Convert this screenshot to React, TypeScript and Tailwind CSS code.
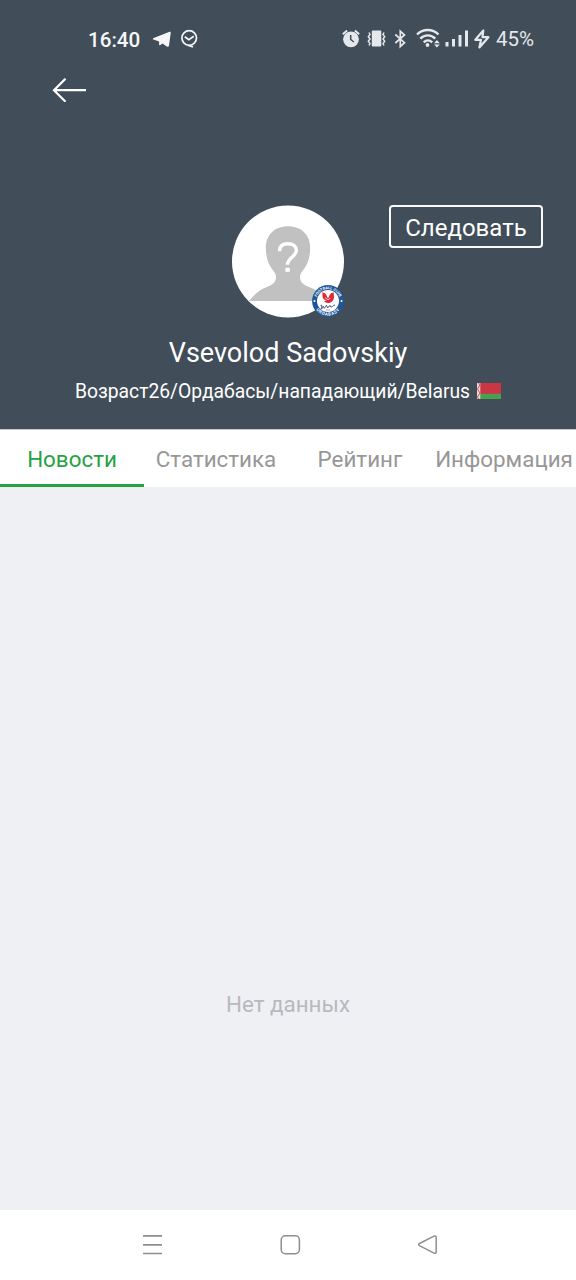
import React from "react";

function StatusBar() {
  return (
    <div className="flex h-[78px] items-center pl-[88px] text-[#f4f6f8]">
      <span className="w-[53px] whitespace-nowrap pt-[2px] text-[20.600px] font-medium leading-none">16:40</span>
      <svg className="ml-[10px]" width="52" height="30" viewBox="151 24 52 30" fill="none">
        <path d="M153.300 39.600c-.8-.4-.4-1.200.4-1.500L169 32c1.200-.5 1.900 0 1.700 1.200l-1.700 12.300c-.2 1.300-1.200 1.600-2.200 1l-4.300-3-2.200 1.500c-.6.400-1.200.300-1.200-.600v-3z" fill="currentColor" />
        <circle cx="189.200" cy="38" r="7.300" stroke="currentColor" strokeWidth="1.700" />
        <path d="M184.800 36.700l4 3 5-3.500" stroke="currentColor" strokeWidth="1.700" />
        <path d="M188.500 45.500l4.500 1.500" stroke="currentColor" strokeWidth="1.800" />
      </svg>
      <svg className="ml-[137px] text-[#e4e7eb]" width="154" height="30" viewBox="340 24 154 30" fill="none">
        <circle cx="351" cy="39.300" r="7.900" fill="currentColor" />
        <path d="M342.800 34.300l4.300-3.800M359.200 34.300l-4.300-3.800" stroke="currentColor" strokeWidth="2" />
        <path d="M350.700 35v4.500l3.200 2.500" stroke="#414d59" strokeWidth="1.500" />
        <rect x="371.800" y="30.500" width="9.500" height="16" rx="1" fill="currentColor" />
        <path d="M369 32.500l1 2-1.700 2.300 1.700 2.200-1.700 2.300 1.700 2.200-1 2M384 32.500l-1 2 1.700 2.300-1.700 2.200 1.700 2.300-1.700 2.200 1 2" stroke="currentColor" strokeWidth="1.500" />
        <path d="M395.300 34.500l9.200 8.200-4.200 3.800V31.200l4.200 3.800-9.200 8" stroke="currentColor" strokeWidth="1.700" />
        <path d="M417 34.500c6-6 15.500-6 21.500 0M420.300 38.600c4.300-4.300 10.700-4.300 15 0M423.700 42.300c2.500-2.500 6-2.500 8.500 0" stroke="currentColor" strokeWidth="2.400" />
        <circle cx="427.500" cy="45" r="1.900" fill="currentColor" />
        <path d="M434 43.200l2.900-3.200 2.900 3.200zM434 44.500h5.800l-2.900 3z" fill="currentColor" />
        <path d="M447 42v4.500M453.500 39v7.500M460 35v11.500M466.500 30.500v16" stroke="currentColor" strokeWidth="3" />
        <path d="M483.300 30.500l-8 9.300h5.700l-1.600 7.700 9-10.300h-5.900z" stroke="currentColor" strokeWidth="2.200" strokeLinejoin="round" />
      </svg>
      <span className="ml-[2px] whitespace-nowrap pt-[1px] text-[20.500px] leading-none text-[#e4e7eb]">45%</span>
    </div>
  );
}

function ClubBadge() {
  return (
    <svg className="absolute left-[79px] top-[79px]" width="33" height="33" viewBox="-17 -17 33 33">
      <defs>
        <path id="ring-top" d="M-11.900 0A11.900 11.900 0 0 1 11.900 0" />
        <path id="ring-bottom" d="M-14.700 0A14.700 14.700 0 0 0 14.700 0" />
      </defs>
      <circle r="15.900" fill="#1e5799" />
      <circle r="11" fill="#fff" />
      <text className="fill-white text-[3.800px] font-bold">
        <textPath href="#ring-top" startOffset="50%" textAnchor="middle">FOOTBALL CLUB</textPath>
      </text>
      <text className="fill-white text-[4.400px] font-bold tracking-[0.6px]">
        <textPath href="#ring-bottom" startOffset="50%" textAnchor="middle">ORDABASY</textPath>
      </text>
      <circle cx="-13.500" cy="0" r="1" fill="#fff" />
      <circle cx="13.500" cy="0" r="1" fill="#fff" />
      <path d="M-6-8.500c2.500 0 4 1 4.500 3L0-2.500l1.500-3c.5-2 2-3 4.500-3-.8 1.700.3 3 0 5C5.500-.3 3.200 2 .2 2-1.500 2-3.200 1-4 0c1 0 2-.2 2.500-.8C-4-1.200-5.500-2.500-5.500-4.500c0-1.500.3-2.700-.5-4z" fill="#df2837" />
      <path d="M-2.500-3.500C-1.500-1 1.500-.8 2-3" stroke="#fff" strokeWidth=".9" fill="none" />
      <path d="M-7.500 4.500c3-2 0 4 1 3.500s1-3 2-2.500-.5 2 1 1.500 1-3 2-2.500 0 2.500 1.500 2 1-2 2-2 0 2 1.500 1.500 1.500-2 3.500-2" stroke="#273e70" strokeWidth=".9" fill="none" />
      <path d="M-2 9h4" stroke="#df7780" strokeWidth=".8" />
    </svg>
  );
}

function Avatar() {
  return (
    <div className="relative mx-auto h-[112px] w-[112px] shrink-0">
      <svg width="112" height="113" viewBox="232 205 112 113" fill="none">
        <circle cx="288" cy="261.400" r="56" fill="#fff" />
        <path d="M288 226.300c-14 0-22.200 9.200-22.200 21.700 0 8.500 2.500 16.500 6.500 21.500 2.500 3 3.700 4.800 3.700 7.500 0 5-2.500 7.300-8 9.500-8.500 3-13 7.500-19 14.500h78c-6-7-10.500-11.500-19-14.500-5.500-2.200-8-4.500-8-9.500 0-2.700 1.200-4.500 3.700-7.500 4-5 6.500-13 6.500-21.500 0-12.500-8.200-21.700-22.200-21.700z" fill="#c1c1c1" />
        <path d="M279.500 251.300c0-5 3.300-7.500 8.500-7.500s8.300 2.600 8.300 6.800c0 6.200-8.800 6.700-8.800 14.200" stroke="#fff" strokeWidth="3.400" />
        <rect x="285.400" y="267.800" width="4.400" height="4" fill="#fff" />
      </svg>
      <ClubBadge />
    </div>
  );
}

function BelarusFlag() {
  return (
    <svg className="mb-[2px]" width="24" height="16" viewBox="0 0 24 16">
      <path d="M0 0h24v11H0z" fill="#cb3544" />
      <path d="M0 10.800h24V16H0z" fill="#4a9f50" />
      <path d="M0 0h3.300v16H0z" fill="#ead6d8" />
      <path d="M1.700 0l1.300 2-1.300 2L.4 6l1.300 2L3 10l-1.300 2-1.300 2 1.300 2" stroke="#bd4651" strokeWidth=".9" fill="none" />
    </svg>
  );
}

function ProfileHeader() {
  return (
    <header className="h-[429px] shrink-0 bg-[#414d59] text-white">
      <StatusBar />
      <button className="ml-[52px] block h-[24px]" aria-label="Назад">
        <svg width="36" height="24" viewBox="52 78 36 24" fill="none" stroke="#fff" strokeWidth="2.200">
          <path d="M54 90.200h32M65.500 78.700L54 90.200l11.500 11.500" />
        </svg>
      </button>
      <div className="mt-[103px] grid h-[113px] grid-cols-[1fr_112px_1fr] items-start">
        <span />
        <Avatar />
        <button className="ml-[45px] h-[43px] w-[154px] whitespace-nowrap rounded-[4px] border-2 border-[#f8fafb] pt-[2px] text-[24px] leading-none">
          Следовать
        </button>
      </div>
      <h1 className="mt-[17px] text-center text-[27px] leading-[36px]">Vsevolod Sadovskiy</h1>
      <div className="mt-[9px] flex items-center justify-center gap-[7px] text-[19.300px] leading-[24px]">
        <span className="whitespace-nowrap">Возраст26/Ордабасы/нападающий/Belarus</span>
        <BelarusFlag />
      </div>
    </header>
  );
}

function Tabs() {
  return (
    <nav className="grid h-[58px] shrink-0 grid-cols-4 border-t border-[#c5cace] bg-white text-center text-[22.400px] leading-[58px] text-[#979797]">
      <a className="h-[57px] whitespace-nowrap border-b-[3px] border-[#27a243] text-[#27a243]">Новости</a>
      <a className="whitespace-nowrap">Статистика</a>
      <a className="whitespace-nowrap">Рейтинг</a>
      <a className="whitespace-nowrap">Информация</a>
    </nav>
  );
}

function NavigationBar() {
  return (
    <footer className="flex h-[70px] shrink-0 items-center justify-between bg-white pl-[142px] pr-[137px]">
      <svg width="22" height="24" viewBox="142 1233 22 24" stroke="#8e8e8e" strokeWidth="1.700">
        <path d="M143 1235.800h19M143 1244.800h19M143 1253.500h19" />
      </svg>
      <svg width="22" height="22" viewBox="280 1234 22 22" fill="none" stroke="#8e8e8e" strokeWidth="1.500">
        <rect x="281.200" y="1235.700" width="18.200" height="18" rx="4.200" />
      </svg>
      <svg width="22" height="22" viewBox="417 1234 22 22" fill="none" stroke="#8e8e8e" strokeWidth="1.500">
        <path d="M419.500 1243.500l14.500-7.400c1.100-.5 2.200.1 2.200 1.300v14.500c0 1.200-1.100 1.800-2.200 1.200l-14.500-7.400c-1.100-.6-1.100-1.600 0-2.200z" />
      </svg>
    </footer>
  );
}

export default function App() {
  return (
    <div className="flex h-[1280px] w-[576px] flex-col overflow-hidden bg-[#eff0f4] font-['Roboto',sans-serif]">
      <ProfileHeader />
      <Tabs />
      <main className="flex-1 pt-[501px] text-center text-[22.400px] leading-[32px] text-[#b8b9bd]">Нет данных</main>
      <NavigationBar />
    </div>
  );
}
